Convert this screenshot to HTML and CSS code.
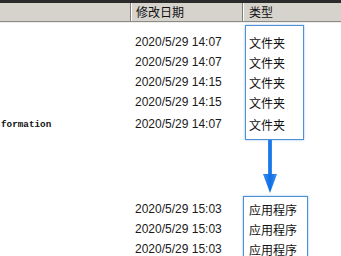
FILE: index.html
```html
<!DOCTYPE html>
<html>
<head>
<meta charset="utf-8">
<link rel="stylesheet" href="styles.css">
</head>
<body>
<div class="topbar"></div>
<div class="header">
  <div class="hcell name"></div>
  <div class="hcell date">修改日期</div>
  <div class="hcell type">类型</div>
</div>
<div class="content">
  <div class="group g1">
    <div class="row"><span class="c-name"></span><span class="c-date">2020/5/29 14:07</span><span class="c-type">文件夹</span></div>
    <div class="row"><span class="c-name"></span><span class="c-date">2020/5/29 14:07</span><span class="c-type">文件夹</span></div>
    <div class="row"><span class="c-name"></span><span class="c-date">2020/5/29 14:15</span><span class="c-type">文件夹</span></div>
    <div class="row"><span class="c-name"></span><span class="c-date">2020/5/29 14:15</span><span class="c-type">文件夹</span></div>
    <div class="row r5"><span class="c-name mono">formation</span><span class="c-date">2020/5/29 14:07</span><span class="c-type">文件夹</span></div>
  </div>
  <div class="group g2">
    <div class="row"><span class="c-name"></span><span class="c-date">2020/5/29 15:03</span><span class="c-type">应用程序</span></div>
    <div class="row"><span class="c-name"></span><span class="c-date">2020/5/29 15:03</span><span class="c-type">应用程序</span></div>
    <div class="row"><span class="c-name"></span><span class="c-date">2020/5/29 15:03</span><span class="c-type">应用程序</span></div>
  </div>
  <div class="box box1"></div>
  <svg class="arrow" width="20" height="54" viewBox="0 0 20 54">
    <defs>
      <linearGradient id="ag" x1="0" y1="0" x2="1" y2="0">
        <stop offset="0" stop-color="#3a8ef0"/>
        <stop offset="0.5" stop-color="#0f6fe6"/>
        <stop offset="1" stop-color="#3a8ef0"/>
      </linearGradient>
    </defs>
    <rect x="8" y="0" width="4" height="38" fill="url(#ag)"/>
    <polygon points="3,34 17,34 10,53" fill="url(#ag)"/>
  </svg>
  <div class="box box2"></div>
</div>
</body>
</html>
```
FILE: styles.css
```css
html, body {
  margin: 0;
  padding: 0;
  background: #ffffff;
  width: 341px;
  height: 256px;
  overflow: hidden;
}
body {
  font-family: "Liberation Sans", "Noto Sans CJK SC", sans-serif;
  color: #000;
}
.topbar {
  height: 3px;
  background: #2b2b2b;
}
.header {
  display: flex;
  height: 18px;
  background: #d6d3cc;
  border-bottom: 1px solid #8c8a86;
  box-shadow: 0 1px 0 #efeeea;
}
.hcell {
  box-sizing: border-box;
  height: 18px;
  font-family: "Noto Sans CJK SC", sans-serif;
  font-size: 12px;
  line-height: 18px;
  color: #111;
}
.hcell.name {
  width: 131px;
  border-right: 1px solid #7e7c78;
}
.hcell.date {
  width: 112px;
  padding-left: 4px;
  border-left: 1px solid #ffffff;
  border-right: 1px solid #7e7c78;
}
.hcell.type {
  flex: 1;
  padding-left: 5px;
  border-left: 1px solid #ffffff;
}
.content {
  position: relative;
  height: 234px;
}
.group.g1 {
  padding-top: 10px;
}
.group.g2 {
  padding-top: 65px;
}
.row {
  display: flex;
  height: 20px;
  align-items: center;
}
.row.r5 {
  margin-top: 2px;
}
.c-name {
  width: 135px;
  padding-left: 1px;
  box-sizing: border-box;
}
.mono {
  font-family: "Liberation Mono", monospace;
  font-size: 9.3px;
  font-weight: bold;
  color: #111;
}
.c-date {
  width: 114px;
  font-size: 12px;
  color: #1a1a1a;
}
.c-type {
  font-family: "Noto Sans CJK SC", sans-serif;
  font-size: 12px;
  color: #111;
}
.box {
  position: absolute;
  border: 1.5px solid #4f8fd6;
  box-shadow: 0 0 2px rgba(79, 143, 214, 0.6);
}
.box1 {
  left: 245px;
  top: 3px;
  width: 57px;
  height: 113px;
}
.box2 {
  left: 243px;
  top: 174px;
  width: 63px;
  height: 80px;
}
.arrow {
  position: absolute;
  left: 260px;
  top: 118px;
}
```
